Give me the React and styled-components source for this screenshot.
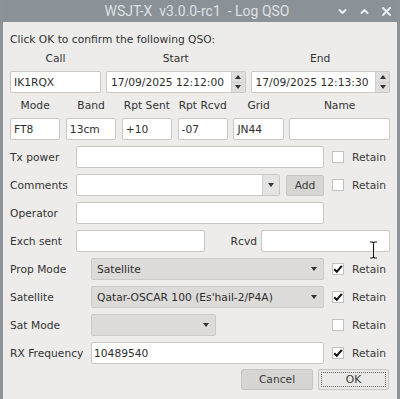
import React from "react";
import styled, { createGlobalStyle } from "styled-components";

const GlobalStyle = createGlobalStyle`
  html, body {
    margin: 0;
    padding: 0;
    background: #8d9296;
  }
  body {
    font-family: "DejaVu Sans", "Liberation Sans", sans-serif;
    font-size: 10.7px;
    color: #333333;
  }
`;

const Desktop = styled.div`
  position: relative;
  width: 400px;
  height: 399px;
  display: flex;
  justify-content: center;
  overflow: hidden;
`;

const Window = styled.div`
  width: 394px;
  height: 100%;
  background: #edecea;
  display: flex;
  flex-direction: column;
`;

const TitleBar = styled.div`
  height: 22px;
  flex-shrink: 0;
  background: #8a9197;
  display: grid;
  grid-template-columns: 64px 1fr 64px;
  align-items: center;
`;

const Title = styled.div`
  text-align: center;
  font-family: Roboto, "Noto Sans", sans-serif;
  font-size: 14px;
  color: #dde1e4;
  white-space: pre;
  padding-right: 6px;
`;

const Controls = styled.div`
  display: flex;
  justify-content: flex-end;
  align-items: center;
  gap: 11px;
  padding-right: 5px;
`;

const Body = styled.div`
  padding: 0 7px;
  display: flex;
  flex-direction: column;
`;

const Intro = styled.div`
  padding-top: 10px;
  line-height: 16px;
`;

const TopGrid = styled.div`
  display: grid;
  grid-template-columns: ${({ $cols }) => $cols};
  column-gap: ${({ $gap }) => $gap}px;
  margin-top: ${({ $top }) => $top}px;
`;

const Head = styled.div`
  text-align: center;
  line-height: 14px;
  margin-bottom: 5px;
  white-space: nowrap;
`;

const Field = styled.div`
  height: 22px;
  box-sizing: border-box;
  background: #ffffff;
  border: 1px solid #c9c8c5;
  border-radius: 2px;
  display: flex;
  align-items: center;
  padding-left: ${({ $pad }) => $pad ?? 3}px;
  color: #2e2e2e;
  white-space: nowrap;
  overflow: hidden;
  min-width: 0;
`;

const Spin = styled.div`
  height: 22px;
  box-sizing: border-box;
  background: #ffffff;
  border: 1px solid #c9c8c5;
  border-radius: 2px;
  display: flex;
  overflow: hidden;
`;

const SpinText = styled.div`
  flex: 1;
  display: flex;
  align-items: center;
  padding-left: 4px;
  color: #2e2e2e;
  white-space: nowrap;
`;

const SpinButtons = styled.div`
  width: 13px;
  background: #dfdedc;
  border-left: 1px solid #cfcecc;
  display: flex;
  flex-direction: column;
`;

const SpinHalf = styled.div`
  flex: 1;
  display: flex;
  align-items: center;
  justify-content: center;
  & + & {
    border-top: 1px solid #cfcecc;
  }
`;

const Rows = styled.div`
  display: flex;
  flex-direction: column;
  gap: 6px;
  margin-top: 6px;
`;

const Row = styled.div`
  display: grid;
  grid-template-columns: ${({ $label }) => $label}px 1fr 66px;
  align-items: center;
  height: 22px;
`;

const Label = styled.div`
  white-space: nowrap;
`;

const RetainCell = styled.label`
  display: flex;
  align-items: center;
  gap: 8px;
  padding-left: 8px;
  color: #3a3a3a;
`;

const Box = styled.span`
  width: 12px;
  height: 12px;
  box-sizing: border-box;
  background: #ffffff;
  border: 1px solid #c2c1bf;
  display: flex;
  align-items: center;
  justify-content: center;
`;

const Combo = styled.div`
  height: 22px;
  box-sizing: border-box;
  width: ${({ $w }) => ($w ? `${$w}px` : "auto")};
  background: #dcdbd9;
  border: 1px solid #cbcac8;
  border-radius: 2px;
  display: flex;
  align-items: center;
  justify-content: space-between;
  padding: 0 6px 0 5px;
  color: #2e2e2e;
  white-space: nowrap;
`;

const EditCombo = styled.div`
  height: 22px;
  box-sizing: border-box;
  flex: 1;
  background: #ffffff;
  border: 1px solid #c9c8c5;
  border-radius: 2px;
  display: flex;
  overflow: hidden;
`;

const ComboArrowBox = styled.div`
  width: 16px;
  margin-left: auto;
  background: #e4e3e1;
  border-left: 1px solid #d2d1cf;
  display: flex;
  align-items: center;
  justify-content: center;
`;

const Inline = styled.div`
  display: flex;
  gap: ${({ $gap }) => $gap}px;
  align-items: center;
  min-width: 0;
`;

const Button = styled.div`
  height: 21px;
  width: ${({ $w }) => $w}px;
  box-sizing: border-box;
  background: ${({ $default }) => ($default ? "#e9e8e6" : "#d6d5d3")};
  border: 1px solid #c6c5c3;
  border-radius: 2px;
  display: flex;
  align-items: center;
  justify-content: center;
  color: #3a3a3a;
  position: relative;
  ${({ $focus }) =>
    $focus &&
    `&::after {
      content: "";
      position: absolute;
      inset: 2px;
      border: 1px dotted #6a6a6a;
    }`}
`;

const ExchGrid = styled.div`
  grid-column: 2 / 4;
  display: grid;
  grid-template-columns: 129px 1fr 129px;
  align-items: center;
`;

const RcvdLabel = styled.div`
  text-align: right;
  padding-right: 4px;
`;

const ButtonRow = styled.div`
  display: flex;
  justify-content: flex-end;
  gap: 5px;
  margin-top: 5px;
  padding-right: 1px;
`;

const Cursor = styled.svg`
  position: absolute;
  left: 369px;
  top: 241px;
`;

const Arrow = ({ up }) => (
  <svg width="6" height="4" viewBox="0 0 6 4">
    {up ? <path d="M0 4 L3 0 L6 4 Z" fill="#333" /> : <path d="M0 0 L6 0 L3 4 Z" fill="#333" />}
  </svg>
);

const Check = () => (
  <svg width="10" height="10" viewBox="0 0 10 10">
    <path d="M1.2 5.2 L3.8 7.8 L8.8 1.8" fill="none" stroke="#111" strokeWidth="2.1" />
  </svg>
);

const Retain = ({ checked }) => (
  <RetainCell>
    <Box>{checked && <Check />}</Box>
    Retain
  </RetainCell>
);

const SpinBox = ({ value }) => (
  <Spin>
    <SpinText>{value}</SpinText>
    <SpinButtons>
      <SpinHalf>
        <Arrow up />
      </SpinHalf>
      <SpinHalf>
        <Arrow />
      </SpinHalf>
    </SpinButtons>
  </Spin>
);

const Chevron = ({ d }) => (
  <svg width="11" height="11" viewBox="0 0 11 11">
    <path d={d} fill="none" stroke="#eceef0" strokeWidth="2" strokeLinecap="round" strokeLinejoin="round" />
  </svg>
);

const topHeads = ["Call", "Start", "End"];
const midHeads = ["Mode", "Band", "Rpt Sent", "Rpt Rcvd", "Grid", "Name"];
const midValues = ["FT8", "13cm", "+10", "-07", "JN44", ""];

export default function App() {
  return (
    <Desktop>
      <GlobalStyle />
      <Window>
        <TitleBar>
          <span />
          <Title>WSJT-X  v3.0.0-rc1  - Log QSO</Title>
          <Controls>
            <Chevron d="M2.5 4 L5.5 7 L8.5 4" />
            <Chevron d="M2.5 7 L5.5 4 L8.5 7" />
            <Chevron d="M2 2 L9 9 M9 2 L2 9" />
          </Controls>
        </TitleBar>
        <Body>
          <Intro>Click OK to confirm the following QSO:</Intro>

          <TopGrid $cols="91px 1fr 1fr" $gap={5} $top={4}>
            {topHeads.map((h) => (
              <Head key={h}>{h}</Head>
            ))}
            <Field>IK1RQX</Field>
            <SpinBox value="17/09/2025 12:12:00" />
            <SpinBox value="17/09/2025 12:13:30" />
          </TopGrid>

          <TopGrid $cols="1fr 1fr 1fr 1fr 1fr 2fr" $gap={5.5} $top={6}>
            {midHeads.map((h) => (
              <Head key={h}>{h}</Head>
            ))}
            {midValues.map((v, i) => (
              <Field key={i}>{v}</Field>
            ))}
          </TopGrid>

          <Rows>
            <Row $label={66}>
              <Label>Tx power</Label>
              <Field />
              <Retain />
            </Row>
            <Row $label={66}>
              <Label>Comments</Label>
              <Inline $gap={6}>
                <EditCombo>
                  <ComboArrowBox>
                    <Arrow />
                  </ComboArrowBox>
                </EditCombo>
                <Button $w={38}>Add</Button>
              </Inline>
              <Retain />
            </Row>
            <Row $label={66}>
              <Label>Operator</Label>
              <Field />
              <span />
            </Row>
            <Row $label={66}>
              <Label>Exch sent</Label>
              <ExchGrid>
                <Field />
                <RcvdLabel>Rcvd</RcvdLabel>
                <Field />
              </ExchGrid>
            </Row>
            <Row $label={81}>
              <Label>Prop Mode</Label>
              <Combo>
                Satellite
                <Arrow />
              </Combo>
              <Retain checked />
            </Row>
            <Row $label={81}>
              <Label>Satellite</Label>
              <Combo>
                Qatar-OSCAR 100 (Es'hail-2/P4A)
                <Arrow />
              </Combo>
              <Retain checked />
            </Row>
            <Row $label={81}>
              <Label>Sat Mode</Label>
              <Combo $w={125}>
                <span />
                <Arrow />
              </Combo>
              <Retain />
            </Row>
            <Row $label={81}>
              <Label>RX Frequency</Label>
              <Field $pad={2}>10489540</Field>
              <Retain checked />
            </Row>
          </Rows>

          <ButtonRow>
            <Button $w={72}>Cancel</Button>
            <Button $w={71} $default $focus>
              OK
            </Button>
          </ButtonRow>
        </Body>
      </Window>
      <Cursor width="9" height="18" viewBox="0 0 9 18">
        <path
          d="M1 1 H3.5 L4.5 2 L5.5 1 H8 M4.5 2 V16 M1 17 H3.5 L4.5 16 L5.5 17 H8"
          fill="none"
          stroke="#fff"
          strokeWidth="2.6"
        />
        <path
          d="M1 1 H3.5 L4.5 2 L5.5 1 H8 M4.5 2 V16 M1 17 H3.5 L4.5 16 L5.5 17 H8"
          fill="none"
          stroke="#111"
          strokeWidth="1.1"
        />
      </Cursor>
    </Desktop>
  );
}
